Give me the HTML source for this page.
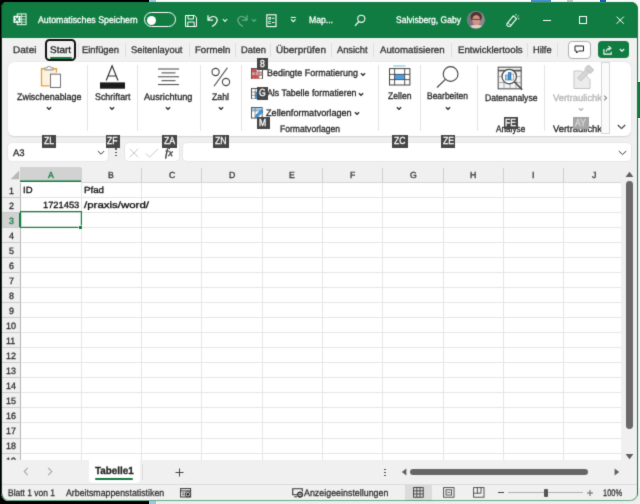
<!DOCTYPE html>
<html lang="de"><head><meta charset="utf-8"><title>Excel</title><style>
html,body{margin:0;padding:0;background:#000}
body{width:640px;height:504px;position:relative;overflow:hidden;font-family:"Liberation Sans",sans-serif}
.b{position:absolute;display:block}
.t{-webkit-text-stroke:0.3px currentColor;position:absolute;white-space:nowrap;transform-origin:0 50%;display:block}
.clip{position:absolute;overflow:hidden}
.tip{font-size:9px;text-align:center;letter-spacing:-0.2px}
.fb{background:#fff;border-radius:4px;box-shadow:0 0 0 0.6px #e0e0e0}
</style></head><body>
<svg width="0" height="0" style="position:absolute"><defs><filter id="soft" x="-1%" y="-1%" width="102%" height="102%" color-interpolation-filters="sRGB"><feConvolveMatrix order="3" kernelMatrix="1 6 1 6 36 6 1 6 1" divisor="64" edgeMode="duplicate" preserveAlpha="false"/></filter></defs></svg>
<div class="b" style="left:0.00px;top:0.00px;width:640.00px;height:504.00px;background:#000000;"></div>
<div class="b" style="left:156.00px;top:0.00px;width:484.00px;height:3.00px;background:#fbfbfb;"></div>
<div class="b" style="left:149.00px;top:0.00px;width:7.00px;height:3.00px;background:#9fc6e6;"></div>
<div class="b" style="left:531.00px;top:0.00px;width:20.00px;height:2.00px;background:#4a8fd0;"></div>
<div class="b" style="left:567.00px;top:0.00px;width:6.00px;height:2.00px;background:#c8c8c8;"></div>
<div class="b" style="left:600.00px;top:0.00px;width:6.00px;height:2.00px;background:#1f5fb4;"></div>
<div class="b" style="left:636.00px;top:0.00px;width:4.00px;height:504.00px;background:#f4f4f4;"></div>
<div class="b" style="left:156.00px;top:499.00px;width:484.00px;height:5.00px;background:#ececec;"></div>
<div class="b" style="left:149.00px;top:500.00px;width:7.00px;height:4.00px;background:#9fc6e6;"></div>
<div class="b" style="left:624.00px;top:0.00px;width:16.00px;height:14.00px;background:#f8f8f8;"></div>
<div class="b" style="left:624.00px;top:488.00px;width:16.00px;height:16.00px;background:#eeeeee;"></div>
<div class="b" style="left:637.00px;top:82.00px;width:3.00px;height:36.00px;background:#107c41;"></div>
<div class="b" id="win" style="left:1px;top:2px;width:636.5px;height:499px;background:#f0f0f0;border-radius:6px 7px 8px 8px;overflow:hidden;will-change:transform;filter:url(#soft);box-shadow:inset 0 0 0 1px #107c41">
<div class="b" style="left:-1px;top:-2px;width:640px;height:504px">
<div class="b" style="left:0.00px;top:0.00px;width:640.00px;height:38.00px;background:#107c41;"></div>
<div class="b" style="left:2.00px;top:38.00px;width:635.00px;height:24.00px;background:#f1f1f1;"></div>
<svg class="b" style="left:12.80px;top:13.30px;" width="14" height="13.1" viewBox="0 0 15 14" preserveAspectRatio="none">
<rect x="4.5" y="1" width="9.5" height="11.5" fill="none" stroke="#fff" stroke-width="1"/>
<path d="M4.5 3.8H14M4.5 6.7H14M4.5 9.6H14M9.3 1V12.5" stroke="#fff" stroke-width="0.9" opacity="0.85"/>
<rect x="0.5" y="3" width="7.5" height="7.5" fill="#fff"/>
<path d="M2.4 4.6L6.1 9M6.1 4.6L2.4 9" stroke="#107c41" stroke-width="1.1"/>
</svg>
<span class="t" style="left:38.00px;top:13.00px;font-size:9.6px;line-height:14px;color:#ffffff;transform:rotate(0.03deg) scaleX(0.9168);">Automatisches Speichern</span>
<div class="b" style="left:143.8px;top:12.4px;width:29.8px;height:12.8px;border:1.2px solid #fff;border-radius:8px"></div>
<div class="b" style="left:147.4px;top:15.6px;width:9px;height:9px;background:#fff;border-radius:50%"></div>
<svg class="b" style="left:184.00px;top:13.50px;" width="14" height="14" viewBox="0 0 14 14">
<path d="M1.5 1.5H10.5L12.5 3.5V12.5H1.5Z" fill="none" stroke="#fff" stroke-width="1"/>
<path d="M4 1.5V5H9.5V1.5M3.8 12.5V8H10.2V12.5" fill="none" stroke="#fff" stroke-width="1"/>
</svg>
<svg class="b" style="left:206.00px;top:13.00px;" width="14" height="15" viewBox="0 0 14 15">
<path d="M2 2.2V7.2H7" fill="none" stroke="#fff" stroke-width="1.2"/>
<path d="M2.2 7C4 3.6 7.5 2.6 9.8 4.4C12.4 6.5 11.5 10.2 6 13.6" fill="none" stroke="#fff" stroke-width="1.2"/>
</svg>
<svg class="b" style="left:222.00px;top:18.00px;" width="6" height="5" viewBox="0 0 6 5"><path d="M0.8 1L3 3.4L5.2 1" fill="none" stroke="#fff" stroke-width="1.1"/></svg>
<svg class="b" style="left:235.00px;top:13.00px;" width="14" height="15" viewBox="0 0 14 15">
<g opacity="0.4"><path d="M12 2.2V7.2H7" fill="none" stroke="#fff" stroke-width="1.2"/>
<path d="M11.8 7C10 3.6 6.5 2.6 4.2 4.4C1.6 6.5 2.5 10.2 8 13.6" fill="none" stroke="#fff" stroke-width="1.2"/></g>
</svg>
<svg class="b" style="left:251.00px;top:18.00px;" width="6" height="5" viewBox="0 0 6 5"><path d="M0.8 1L3 3.4L5.2 1" fill="none" stroke="#fff" stroke-width="1.1" opacity="0.4"/></svg>
<svg class="b" style="left:265.80px;top:14.00px;" width="11" height="13.5" viewBox="0 0 11 13.5">
<rect x="0.8" y="0.8" width="9.2" height="11.8" fill="none" stroke="#fff" stroke-width="1.1"/>
<rect x="2.8" y="3.4" width="1.8" height="1.8" fill="none" stroke="#fff" stroke-width="0.8"/><path d="M6 4.3H8.4" stroke="#fff" stroke-width="1"/>
<rect x="2.8" y="7.6" width="1.8" height="1.8" fill="none" stroke="#fff" stroke-width="0.8"/><path d="M6 8.5H8.4" stroke="#fff" stroke-width="1"/>
</svg>
<svg class="b" style="left:289.80px;top:16.30px;" width="7" height="8" viewBox="0 0 7 8"><path d="M0.8 1.4H5.8" stroke="#fff" stroke-width="1"/><path d="M1 3.4L3.3 5.7L5.6 3.4" fill="none" stroke="#fff" stroke-width="1.1"/></svg>
<span class="t" style="left:309.00px;top:13.00px;font-size:9.6px;line-height:14px;color:#ffffff;transform:rotate(0.03deg) scaleX(0.8997);">Map...</span>
<svg class="b" style="left:354.00px;top:14.00px;" width="12" height="13" viewBox="0 0 12 13"><circle cx="7.3" cy="4.8" r="3.6" fill="none" stroke="#fff" stroke-width="1.1"/><path d="M4.8 7.5L1 11.8" stroke="#fff" stroke-width="1.2"/></svg>
<span class="t" style="left:395.60px;top:13.00px;font-size:9.6px;line-height:14px;color:#ffffff;transform:rotate(0.03deg) scaleX(0.8892);">Salvisberg, Gaby</span>
<svg class="b" style="left:467.40px;top:11.40px;" width="17.8" height="17.8" viewBox="0 0 20 20" preserveAspectRatio="none">
<defs><clipPath id="av"><circle cx="10" cy="10" r="9.7"/></clipPath></defs>
<circle cx="10" cy="10" r="10" fill="#9a8f92"/>
<g clip-path="url(#av)">
<rect x="0" y="0" width="20" height="20" fill="#77747f"/>
<rect x="11" y="0" width="9" height="20" fill="#8d8790"/>
<ellipse cx="10.4" cy="6.8" rx="6.4" ry="6" fill="#4e3430"/>
<ellipse cx="10.4" cy="10.4" rx="4.5" ry="5.8" fill="#cf9484"/>
<path d="M6 9.4H14.8" stroke="#5a3a36" stroke-width="1.1"/>
<path d="M2 20C3 16 6.4 15.6 10.4 15.6S17.6 16 19 20Z" fill="#dccfc8"/>
</g>
</svg>
<svg class="b" style="left:505.00px;top:13.00px;" width="15" height="15" viewBox="0 0 15 15">
<path d="M1.8 11.2L8.2 2.8L11.6 5.6L5.4 13.2C3.6 14 1.6 12.8 1.8 11.2Z" fill="none" stroke="#fff" stroke-width="1.1" stroke-linejoin="round"/>
<path d="M3.2 9.6C3.6 11 4.8 11.9 6.3 12" fill="none" stroke="#fff" stroke-width="0.9"/>
<path d="M10.6 2.6L11.2 1M12.4 3.8L13.8 2.6M13 5.8L14.4 5.8" stroke="#fff" stroke-width="0.9"/>
</svg>
<div class="b" style="left:543.00px;top:20.00px;width:8.00px;height:1.00px;background:#ffffff;"></div>
<div class="b" style="left:579.3px;top:16.4px;width:6.2px;height:5.8px;border:1px solid #fff"></div>
<svg class="b" style="left:615.70px;top:16.20px;" width="9" height="9" viewBox="0 0 9 9"><path d="M0.6 0.6L7.8 7.8M7.8 0.6L0.6 7.8" stroke="#fff" stroke-width="1"/></svg>
<span class="t" style="left:13.00px;top:42.70px;font-size:9.6px;line-height:14px;color:#333333;transform:rotate(0.03deg) scaleX(1.0486);">Datei</span>
<span class="t" style="left:50.00px;top:42.70px;font-size:9.6px;line-height:14px;color:#1a1a1a;transform:rotate(0.03deg) scaleX(1.0358);">Start</span>
<span class="t" style="left:82.00px;top:42.70px;font-size:9.6px;line-height:14px;color:#333333;transform:rotate(0.03deg) scaleX(0.9763);">Einfügen</span>
<span class="t" style="left:131.00px;top:42.70px;font-size:9.6px;line-height:14px;color:#333333;transform:rotate(0.03deg) scaleX(0.9747);">Seitenlayout</span>
<span class="t" style="left:194.70px;top:42.70px;font-size:9.6px;line-height:14px;color:#333333;transform:rotate(0.03deg) scaleX(1.0026);">Formeln</span>
<span class="t" style="left:241.00px;top:42.70px;font-size:9.6px;line-height:14px;color:#333333;transform:rotate(0.03deg) scaleX(0.9759);">Daten</span>
<span class="t" style="left:276.00px;top:42.70px;font-size:9.6px;line-height:14px;color:#333333;transform:rotate(0.03deg) scaleX(1.0410);">Überprüfen</span>
<span class="t" style="left:337.00px;top:42.70px;font-size:9.6px;line-height:14px;color:#333333;transform:rotate(0.03deg) scaleX(0.9688);">Ansicht</span>
<span class="t" style="left:380.30px;top:42.70px;font-size:9.6px;line-height:14px;color:#333333;transform:rotate(0.03deg) scaleX(1.0104);">Automatisieren</span>
<span class="t" style="left:457.80px;top:42.70px;font-size:9.6px;line-height:14px;color:#333333;transform:rotate(0.03deg) scaleX(1.0106);">Entwicklertools</span>
<span class="t" style="left:533.40px;top:42.70px;font-size:9.6px;line-height:14px;color:#333333;transform:rotate(0.03deg) scaleX(0.9685);">Hilfe</span>
<div class="b" style="left:78.00px;top:43.00px;width:1.00px;height:14.00px;background:#dedede;"></div>
<div class="b" style="left:124.50px;top:43.00px;width:1.00px;height:14.00px;background:#dedede;"></div>
<div class="b" style="left:188.50px;top:43.00px;width:1.00px;height:14.00px;background:#dedede;"></div>
<div class="b" style="left:235.10px;top:43.00px;width:1.00px;height:14.00px;background:#dedede;"></div>
<div class="b" style="left:270.10px;top:43.00px;width:1.00px;height:14.00px;background:#dedede;"></div>
<div class="b" style="left:331.00px;top:43.00px;width:1.00px;height:14.00px;background:#dedede;"></div>
<div class="b" style="left:373.30px;top:43.00px;width:1.00px;height:14.00px;background:#dedede;"></div>
<div class="b" style="left:450.50px;top:43.00px;width:1.00px;height:14.00px;background:#dedede;"></div>
<div class="b" style="left:527.30px;top:43.00px;width:1.00px;height:14.00px;background:#dedede;"></div>
<div class="b" style="left:556.50px;top:43.00px;width:1.00px;height:14.00px;background:#dedede;"></div>
<div class="b" style="left:45px;top:39px;width:26.6px;height:17.6px;border:2px solid #111;border-radius:4.5px"></div>
<div class="b" style="left:49.50px;top:57.00px;width:22.50px;height:2.00px;background:#107c41;border-radius:1px"></div>
<div class="b" style="left:568px;top:41px;width:21.4px;height:16px;border:1px solid #b0b0b0;border-radius:4px;background:#fff"></div>
<svg class="b" style="left:574.00px;top:45.00px;" width="11" height="10" viewBox="0 0 11 10"><path d="M1 1H9.5V6H4.5L2.6 8V6H1Z" fill="none" stroke="#222" stroke-width="1" stroke-linejoin="round"/></svg>
<div class="b" style="left:598px;top:41px;width:31px;height:17.4px;border-radius:4px;background:#107c41"></div>
<svg class="b" style="left:603.30px;top:44.60px;" width="10" height="10" viewBox="0 0 11 11" preserveAspectRatio="none"><path d="M1 4.5V10H9V7.5" fill="none" stroke="#fff" stroke-width="1.2"/><path d="M3.5 7.4C4 4.8 5.5 3.6 7.3 3.6M6 1.2L8.8 3.6L6 6" fill="none" stroke="#fff" stroke-width="1.2"/></svg>
<svg class="b" style="left:619.00px;top:47.50px;" width="6" height="5" viewBox="0 0 6 5"><path d="M0.8 1L3 3.2L5.2 1" fill="none" stroke="#fff" stroke-width="1.1"/></svg>
<div class="b" style="left:8px;top:62px;width:623px;height:73.5px;background:#ffffff;border-radius:6px;box-shadow:0 0.5px 1.5px rgba(0,0,0,0.12)"></div>
<div class="b" style="left:87.00px;top:65.00px;width:1.00px;height:66.00px;background:#e3e3e3;"></div>
<div class="b" style="left:136.50px;top:65.00px;width:1.00px;height:66.00px;background:#e3e3e3;"></div>
<div class="b" style="left:199.50px;top:65.00px;width:1.00px;height:66.00px;background:#e3e3e3;"></div>
<div class="b" style="left:240.50px;top:65.00px;width:1.00px;height:66.00px;background:#e3e3e3;"></div>
<div class="b" style="left:377.50px;top:65.00px;width:1.00px;height:66.00px;background:#e3e3e3;"></div>
<div class="b" style="left:419.50px;top:65.00px;width:1.00px;height:66.00px;background:#e3e3e3;"></div>
<div class="b" style="left:476.50px;top:65.00px;width:1.00px;height:66.00px;background:#e3e3e3;"></div>
<div class="b" style="left:544.00px;top:65.00px;width:1.00px;height:66.00px;background:#e3e3e3;"></div>
<svg class="b" style="left:39.00px;top:64.20px;" width="24" height="25.6" viewBox="0 0 24 24" preserveAspectRatio="none">
<path d="M2.5 4.5H17.5V20.5H2.5Z" fill="#fdf1df" stroke="none"/><path d="M6 4.5H2.5V20.5H10.5" fill="none" stroke="#e3a243" stroke-width="1.3"/>
<path d="M14 4.5H17.5V8" fill="none" stroke="#e3a243" stroke-width="1.3"/>
<path d="M6 5.5V3.5H8.2C8.4 1.6 11.6 1.6 11.8 3.5H14V5.5Z" fill="#fff" stroke="#9a9a9a" stroke-width="1"/>
<rect x="11.5" y="9.5" width="10" height="12.5" fill="#fff" stroke="#666" stroke-width="0.9"/>
</svg>
<span class="t" style="left:16.50px;top:89.70px;font-size:9.6px;line-height:14px;color:#262626;transform:rotate(0.03deg) scaleX(0.9297);">Zwischenablage</span>
<svg class="b" style="left:45.50px;top:106.20px;" width="6" height="5" viewBox="0 0 6 5"><path d="M0.9 1.2L3 3.3L5.1 1.2" fill="none" stroke="#2a2a2a" stroke-width="1.25"/></svg>
<svg class="b" style="left:99.00px;top:64.00px;" width="27" height="25" viewBox="0 0 27 25">
<path d="M7.2 16.5L13.1 1.8L19 16.5M9.2 12H17" fill="none" stroke="#333" stroke-width="1.15"/>
<rect x="1" y="18.4" width="25" height="6.3" fill="#1a1a1a"/>
</svg>
<span class="t" style="left:94.50px;top:89.70px;font-size:9.6px;line-height:14px;color:#262626;transform:rotate(0.03deg) scaleX(0.9242);">Schriftart</span>
<svg class="b" style="left:109.00px;top:106.20px;" width="6" height="5" viewBox="0 0 6 5"><path d="M0.9 1.2L3 3.3L5.1 1.2" fill="none" stroke="#2a2a2a" stroke-width="1.25"/></svg>
<svg class="b" style="left:156.00px;top:66.00px;" width="26" height="22" viewBox="0 0 26 22">
<path d="M2 3H23M5.5 6.9H19.5M2 10.8H23M5.5 14.7H19.5M2 18.6H23" stroke="#444" stroke-width="1"/>
</svg>
<span class="t" style="left:144.00px;top:89.70px;font-size:9.6px;line-height:14px;color:#262626;transform:rotate(0.03deg) scaleX(0.9567);">Ausrichtung</span>
<svg class="b" style="left:165.00px;top:106.20px;" width="6" height="5" viewBox="0 0 6 5"><path d="M0.9 1.2L3 3.3L5.1 1.2" fill="none" stroke="#2a2a2a" stroke-width="1.25"/></svg>
<svg class="b" style="left:209.00px;top:65.00px;" width="24" height="24" viewBox="0 0 24 24">
<circle cx="6.6" cy="7" r="3.6" fill="none" stroke="#444" stroke-width="1.1"/>
<circle cx="17" cy="17" r="3.6" fill="none" stroke="#444" stroke-width="1.1"/>
<path d="M18.4 2.8L5 21.2" stroke="#444" stroke-width="1.1"/>
</svg>
<span class="t" style="left:212.00px;top:89.70px;font-size:9.6px;line-height:14px;color:#262626;transform:rotate(0.03deg) scaleX(0.9103);">Zahl</span>
<svg class="b" style="left:217.50px;top:106.20px;" width="6" height="5" viewBox="0 0 6 5"><path d="M0.9 1.2L3 3.3L5.1 1.2" fill="none" stroke="#2a2a2a" stroke-width="1.25"/></svg>
<svg class="b" style="left:251.00px;top:67.50px;" width="12" height="11.5" viewBox="0 0 12.5 12.5" preserveAspectRatio="none">
<rect x="0.5" y="0.5" width="11.5" height="11.5" fill="#fff" stroke="#4a4a4a" stroke-width="1"/>
<rect x="1" y="1" width="5" height="3.4" fill="#e8474a"/><rect x="1" y="4.6" width="10.5" height="3.3" fill="#f29b9c"/>
<rect x="1" y="8" width="7" height="3.5" fill="#e8474a"/>
<path d="M0.5 4.4H12M0.5 8H12M4.4 0.5V12M8.2 0.5V12" stroke="#666" stroke-width="0.7"/>
</svg>
<span class="t" style="left:266.50px;top:66.20px;font-size:9.6px;line-height:14px;color:#262626;transform:rotate(0.03deg) scaleX(0.9318);">Bedingte Formatierung</span>
<svg class="b" style="left:359.50px;top:71.50px;" width="6" height="5" viewBox="0 0 6 5"><path d="M0.9 1.2L3 3.3L5.1 1.2" fill="none" stroke="#2a2a2a" stroke-width="1.25"/></svg>
<svg class="b" style="left:251.00px;top:87.50px;" width="12" height="11.5" viewBox="0 0 12.5 12.5" preserveAspectRatio="none">
<rect x="0.5" y="0.5" width="11.5" height="11.5" fill="#fff" stroke="#4a4a4a" stroke-width="1"/>
<rect x="4.4" y="4.4" width="7.6" height="7.6" fill="#3a96dd"/>
<path d="M0.5 4.4H12M0.5 8H12M4.4 0.5V12M8.2 0.5V12" stroke="#666" stroke-width="0.7"/>
</svg>
<span class="t" style="left:266.50px;top:86.20px;font-size:9.6px;line-height:14px;color:#262626;transform:rotate(0.03deg) scaleX(0.9182);">Als Tabelle formatieren</span>
<svg class="b" style="left:358.00px;top:91.50px;" width="6" height="5" viewBox="0 0 6 5"><path d="M0.9 1.2L3 3.3L5.1 1.2" fill="none" stroke="#2a2a2a" stroke-width="1.25"/></svg>
<svg class="b" style="left:251.00px;top:107.00px;" width="13" height="12" viewBox="0 0 14 13" preserveAspectRatio="none">
<rect x="0.5" y="0.5" width="11.5" height="11.5" fill="#fff" stroke="#4a4a4a" stroke-width="1"/>
<rect x="1" y="1" width="10.5" height="3" fill="#9fcdf0"/>
<path d="M0.5 4.2H12M4.4 0.5V12" stroke="#666" stroke-width="0.7"/>
<path d="M4.5 11.5L5.2 8.8L11 3L13 5L7.2 10.8Z" fill="#3a96dd" stroke="#1e6bb0" stroke-width="0.6"/>
</svg>
<span class="t" style="left:266.00px;top:105.70px;font-size:9.6px;line-height:14px;color:#262626;transform:rotate(0.03deg) scaleX(0.9509);">Zellenformatvorlagen</span>
<svg class="b" style="left:354.00px;top:111.00px;" width="6" height="5" viewBox="0 0 6 5"><path d="M0.9 1.2L3 3.3L5.1 1.2" fill="none" stroke="#2a2a2a" stroke-width="1.25"/></svg>
<span class="t" style="left:280.00px;top:121.70px;font-size:9.6px;line-height:14px;color:#262626;transform:rotate(0.03deg) scaleX(0.8924);">Formatvorlagen</span>
<svg class="b" style="left:388.00px;top:64.00px;" width="24" height="23" viewBox="0 0 24 23">
<path d="M5.3 2H17.4" stroke="#8cc4cf" stroke-width="1.2"/>
<rect x="1.5" y="4.6" width="20.4" height="16.4" fill="#fff" stroke="#444" stroke-width="1"/>
<rect x="6.6" y="10.4" width="10.1" height="5.2" fill="#4aa0e6"/>
<path d="M1.5 10.4H21.9M1.5 15.6H21.9M6.6 4.6V21M16.7 4.6V21" stroke="#444" stroke-width="0.9"/>
</svg>
<span class="t" style="left:387.50px;top:89.45px;font-size:9.6px;line-height:14px;color:#262626;transform:rotate(0.03deg) scaleX(0.8987);">Zellen</span>
<svg class="b" style="left:396.30px;top:106.00px;" width="6" height="5" viewBox="0 0 6 5"><path d="M0.9 1.2L3 3.3L5.1 1.2" fill="none" stroke="#2a2a2a" stroke-width="1.25"/></svg>
<svg class="b" style="left:435.00px;top:64.00px;" width="26" height="26" viewBox="0 0 26 26"><circle cx="15.6" cy="10" r="7.4" fill="none" stroke="#444" stroke-width="1.1"/><path d="M10.4 15.4L2 23.5" stroke="#444" stroke-width="1.2"/></svg>
<span class="t" style="left:427.00px;top:89.45px;font-size:9.6px;line-height:14px;color:#262626;transform:rotate(0.03deg) scaleX(0.8829);">Bearbeiten</span>
<svg class="b" style="left:444.50px;top:106.00px;" width="6" height="5" viewBox="0 0 6 5"><path d="M0.9 1.2L3 3.3L5.1 1.2" fill="none" stroke="#2a2a2a" stroke-width="1.25"/></svg>
<svg class="b" style="left:497.00px;top:65.50px;" width="27" height="26" viewBox="0 0 27 26">
<rect x="1.2" y="1.2" width="23" height="21.6" fill="#f4f4f4" stroke="#555" stroke-width="1.1"/>
<path d="M1.2 4.6H24.2" stroke="#555" stroke-width="1.6"/>
<path d="M1.2 10.6H24.2M1.2 16.6H24.2M7 4.6V22.8M13 4.6V22.8M19 4.6V22.8" stroke="#8a8a8a" stroke-width="0.7"/>
<circle cx="12.2" cy="10.6" r="7.2" fill="#fff" stroke="#444" stroke-width="1.2"/>
<rect x="8.6" y="9" width="2.6" height="5" fill="#9fcdf0" stroke="#555" stroke-width="0.5"/>
<rect x="11.2" y="6.4" width="2.8" height="7.6" fill="#3a96dd" stroke="#1e6bb0" stroke-width="0.5"/>
<rect x="14" y="8" width="2.4" height="6" fill="#fff" stroke="#555" stroke-width="0.5"/>
<path d="M17.4 15.8L25.2 23.8" stroke="#444" stroke-width="1.5"/>
</svg>
<span class="t" style="left:484.50px;top:91.20px;font-size:9.6px;line-height:14px;color:#262626;transform:rotate(0.03deg) scaleX(0.8943);">Datenanalyse</span>
<span class="t" style="left:495.75px;top:121.70px;font-size:9.6px;line-height:14px;color:#262626;transform:rotate(0.03deg) scaleX(0.8564);">Analyse</span>
<svg class="b" style="left:572.00px;top:65.00px;" width="24" height="25" viewBox="0 0 24 25">
<path d="M2 6H9.5L18 14.5V23.5H2Z" fill="#ececec" stroke="#c4c4c4" stroke-width="1"/>
<g transform="rotate(-45 13 9)"><rect x="5" y="6.4" width="12" height="4.6" fill="#d6d6d6" stroke="#bdbdbd" stroke-width="0.8"/>
<rect x="17" y="5" width="5" height="7.4" fill="#d0d0d0" stroke="#bdbdbd" stroke-width="0.8"/></g>
</svg>
<div class="clip" style="left:552.5px;top:90.70px;width:48.8px;height:14px"><span class="t" style="left:0;top:0;font-size:9.6px;line-height:14px;color:#b4b4b4;transform:rotate(0.03deg) scaleX(0.9769)">Vertraulichkeit</span></div>
<svg class="b" style="left:578.00px;top:107.00px;" width="6" height="5" viewBox="0 0 6 5"><path d="M0.9 1.2L3 3.3L5.1 1.2" fill="none" stroke="#b4b4b4" stroke-width="1.25"/></svg>
<div class="clip" style="left:553px;top:121.70px;width:48.3px;height:14px"><span class="t" style="left:0;top:0;font-size:9.6px;line-height:14px;color:#262626;transform:rotate(0.03deg) scaleX(0.9769)">Vertraulichkeit</span></div>
<div class="b" style="left:601.3px;top:62px;width:8.4px;height:72px;background:#fbfbfb;border:0.8px solid #d6d6d6;box-sizing:border-box"></div>
<svg class="b" style="left:603.30px;top:95.20px;" width="5" height="6" viewBox="0 0 5 6"><path d="M1.2 0.8L3.6 3L1.2 5.2" fill="none" stroke="#444" stroke-width="1"/></svg>
<svg class="b" style="left:616.50px;top:123.50px;" width="9" height="6" viewBox="0 0 9 6"><path d="M0.8 1L4.5 4.6L8.2 1" fill="none" stroke="#333" stroke-width="1.1"/></svg>
<div class="b fb" style="left:8px;top:143px;width:100px;height:18px"></div>
<span class="t" style="left:13.00px;top:145.60px;font-size:9.6px;line-height:14px;color:#262626;transform:rotate(0.03deg) scaleX(0.9878);">A3</span>
<svg class="b" style="left:96.50px;top:150.00px;" width="8" height="6" viewBox="0 0 8 6"><path d="M0.8 1L4 4.2L7.2 1" fill="none" stroke="#333" stroke-width="1"/></svg>
<div class="b" style="left:115.00px;top:148.30px;width:1.60px;height:1.60px;background:#3c3c3c;border-radius:50%"></div>
<div class="b" style="left:115.00px;top:151.50px;width:1.60px;height:1.60px;background:#3c3c3c;border-radius:50%"></div>
<div class="b" style="left:115.00px;top:154.70px;width:1.60px;height:1.60px;background:#3c3c3c;border-radius:50%"></div>
<div class="b fb" style="left:124.5px;top:143px;width:54.3px;height:18px"></div>
<svg class="b" style="left:128.50px;top:147.50px;" width="10" height="10" viewBox="0 0 10 10"><path d="M0.8 0.8L9.2 9.2M9.2 0.8L0.8 9.2" stroke="#c2c2c2" stroke-width="0.9"/></svg>
<svg class="b" style="left:145.00px;top:147.50px;" width="14" height="10" viewBox="0 0 14 10"><path d="M0.8 5.4L4.6 9.2L13 0.8" fill="none" stroke="#c2c2c2" stroke-width="0.9"/></svg>
<span class="t" style="left:164.5px;top:145.3px;font-family:'Liberation Serif',serif;font-style:italic;font-size:11.5px;line-height:14px;color:#2e2e2e;-webkit-text-stroke:0.3px #2e2e2e;transform:rotate(0.03deg) scaleX(1.05)">f<span style="font-size:10px">x</span></span>
<div class="b fb" style="left:182.5px;top:143px;width:448.5px;height:18px"></div>
<svg class="b" style="left:618.00px;top:150.00px;" width="9" height="6" viewBox="0 0 9 6"><path d="M0.8 1L4.5 4.6L8.2 1" fill="none" stroke="#333" stroke-width="1"/></svg>
<div class="b" style="left:2.00px;top:167.00px;width:635.00px;height:293.00px;background:#f0f0f0;"></div>
<div class="b" style="left:20.50px;top:182.00px;width:600.50px;height:278.00px;background:#ffffff;"></div>
<div class="b" style="left:20.00px;top:167.00px;width:61.00px;height:15.00px;background:#d2d2d2;"></div>
<div class="b" style="left:20.00px;top:180.00px;width:61.00px;height:1.00px;background:#107c41;opacity:0.55"></div>
<div class="b" style="left:20.00px;top:181.00px;width:61.00px;height:1.00px;background:#107c41;"></div>
<div class="b" style="left:2.00px;top:212.56px;width:18.50px;height:15.03px;background:#d2d2d2;"></div>
<div class="b" style="left:19.00px;top:212.56px;width:1.70px;height:15.03px;background:#107c41;"></div>
<div class="b" style="left:80.50px;top:168.00px;width:1.00px;height:14.00px;background:#cfcfcf;"></div>
<div class="b" style="left:140.80px;top:168.00px;width:1.00px;height:14.00px;background:#cfcfcf;"></div>
<div class="b" style="left:201.20px;top:168.00px;width:1.00px;height:14.00px;background:#cfcfcf;"></div>
<div class="b" style="left:261.50px;top:168.00px;width:1.00px;height:14.00px;background:#cfcfcf;"></div>
<div class="b" style="left:321.90px;top:168.00px;width:1.00px;height:14.00px;background:#cfcfcf;"></div>
<div class="b" style="left:382.20px;top:168.00px;width:1.00px;height:14.00px;background:#cfcfcf;"></div>
<div class="b" style="left:442.50px;top:168.00px;width:1.00px;height:14.00px;background:#cfcfcf;"></div>
<div class="b" style="left:502.90px;top:168.00px;width:1.00px;height:14.00px;background:#cfcfcf;"></div>
<div class="b" style="left:563.30px;top:168.00px;width:1.00px;height:14.00px;background:#cfcfcf;"></div>
<div class="b" style="left:81.00px;top:182.00px;width:540.00px;height:1.00px;background:#d4d4d4;"></div>
<div class="b" style="left:20.00px;top:183.00px;width:1.00px;height:277.00px;background:#b4b4b4;"></div>
<svg class="b" style="left:9.50px;top:170.00px;" width="10" height="10" viewBox="0 0 10 10"><path d="M9.2 0.6V9.2H0.6Z" fill="#b8b8b8"/></svg>
<div class="b" style="left:2.00px;top:197.03px;width:18.50px;height:1.00px;background:#cacaca;"></div>
<div class="b" style="left:20.50px;top:197.03px;width:600.50px;height:1.00px;background:#e6e6e6;"></div>
<div class="b" style="left:2.00px;top:212.06px;width:18.50px;height:1.00px;background:#cacaca;"></div>
<div class="b" style="left:20.50px;top:212.06px;width:600.50px;height:1.00px;background:#e6e6e6;"></div>
<div class="b" style="left:2.00px;top:227.09px;width:18.50px;height:1.00px;background:#cacaca;"></div>
<div class="b" style="left:20.50px;top:227.09px;width:600.50px;height:1.00px;background:#e6e6e6;"></div>
<div class="b" style="left:2.00px;top:242.12px;width:18.50px;height:1.00px;background:#cacaca;"></div>
<div class="b" style="left:20.50px;top:242.12px;width:600.50px;height:1.00px;background:#e6e6e6;"></div>
<div class="b" style="left:2.00px;top:257.15px;width:18.50px;height:1.00px;background:#cacaca;"></div>
<div class="b" style="left:20.50px;top:257.15px;width:600.50px;height:1.00px;background:#e6e6e6;"></div>
<div class="b" style="left:2.00px;top:272.18px;width:18.50px;height:1.00px;background:#cacaca;"></div>
<div class="b" style="left:20.50px;top:272.18px;width:600.50px;height:1.00px;background:#e6e6e6;"></div>
<div class="b" style="left:2.00px;top:287.21px;width:18.50px;height:1.00px;background:#cacaca;"></div>
<div class="b" style="left:20.50px;top:287.21px;width:600.50px;height:1.00px;background:#e6e6e6;"></div>
<div class="b" style="left:2.00px;top:302.24px;width:18.50px;height:1.00px;background:#cacaca;"></div>
<div class="b" style="left:20.50px;top:302.24px;width:600.50px;height:1.00px;background:#e6e6e6;"></div>
<div class="b" style="left:2.00px;top:317.27px;width:18.50px;height:1.00px;background:#cacaca;"></div>
<div class="b" style="left:20.50px;top:317.27px;width:600.50px;height:1.00px;background:#e6e6e6;"></div>
<div class="b" style="left:2.00px;top:332.30px;width:18.50px;height:1.00px;background:#cacaca;"></div>
<div class="b" style="left:20.50px;top:332.30px;width:600.50px;height:1.00px;background:#e6e6e6;"></div>
<div class="b" style="left:2.00px;top:347.33px;width:18.50px;height:1.00px;background:#cacaca;"></div>
<div class="b" style="left:20.50px;top:347.33px;width:600.50px;height:1.00px;background:#e6e6e6;"></div>
<div class="b" style="left:2.00px;top:362.36px;width:18.50px;height:1.00px;background:#cacaca;"></div>
<div class="b" style="left:20.50px;top:362.36px;width:600.50px;height:1.00px;background:#e6e6e6;"></div>
<div class="b" style="left:2.00px;top:377.39px;width:18.50px;height:1.00px;background:#cacaca;"></div>
<div class="b" style="left:20.50px;top:377.39px;width:600.50px;height:1.00px;background:#e6e6e6;"></div>
<div class="b" style="left:2.00px;top:392.42px;width:18.50px;height:1.00px;background:#cacaca;"></div>
<div class="b" style="left:20.50px;top:392.42px;width:600.50px;height:1.00px;background:#e6e6e6;"></div>
<div class="b" style="left:2.00px;top:407.45px;width:18.50px;height:1.00px;background:#cacaca;"></div>
<div class="b" style="left:20.50px;top:407.45px;width:600.50px;height:1.00px;background:#e6e6e6;"></div>
<div class="b" style="left:2.00px;top:422.48px;width:18.50px;height:1.00px;background:#cacaca;"></div>
<div class="b" style="left:20.50px;top:422.48px;width:600.50px;height:1.00px;background:#e6e6e6;"></div>
<div class="b" style="left:2.00px;top:437.51px;width:18.50px;height:1.00px;background:#cacaca;"></div>
<div class="b" style="left:20.50px;top:437.51px;width:600.50px;height:1.00px;background:#e6e6e6;"></div>
<div class="b" style="left:2.00px;top:452.54px;width:18.50px;height:1.00px;background:#cacaca;"></div>
<div class="b" style="left:20.50px;top:452.54px;width:600.50px;height:1.00px;background:#e6e6e6;"></div>
<div class="b" style="left:80.50px;top:183.00px;width:1.00px;height:277.00px;background:#e6e6e6;"></div>
<div class="b" style="left:140.80px;top:183.00px;width:1.00px;height:277.00px;background:#e6e6e6;"></div>
<div class="b" style="left:201.20px;top:183.00px;width:1.00px;height:277.00px;background:#e6e6e6;"></div>
<div class="b" style="left:261.50px;top:183.00px;width:1.00px;height:277.00px;background:#e6e6e6;"></div>
<div class="b" style="left:321.90px;top:183.00px;width:1.00px;height:277.00px;background:#e6e6e6;"></div>
<div class="b" style="left:382.20px;top:183.00px;width:1.00px;height:277.00px;background:#e6e6e6;"></div>
<div class="b" style="left:442.50px;top:183.00px;width:1.00px;height:277.00px;background:#e6e6e6;"></div>
<div class="b" style="left:502.90px;top:183.00px;width:1.00px;height:277.00px;background:#e6e6e6;"></div>
<div class="b" style="left:563.30px;top:183.00px;width:1.00px;height:277.00px;background:#e6e6e6;"></div>
<span class="t" style="left:48.09px;top:167.60px;font-size:8.9px;line-height:14px;color:#107c41;transform:rotate(0.03deg) scaleX(0.9800);">A</span>
<span class="t" style="left:108.09px;top:167.60px;font-size:8.9px;line-height:14px;color:#333;transform:rotate(0.03deg) scaleX(0.9800);">B</span>
<span class="t" style="left:168.85px;top:167.60px;font-size:8.9px;line-height:14px;color:#333;transform:rotate(0.03deg) scaleX(0.9800);">C</span>
<span class="t" style="left:228.85px;top:167.60px;font-size:8.9px;line-height:14px;color:#333;transform:rotate(0.03deg) scaleX(0.9800);">D</span>
<span class="t" style="left:289.09px;top:167.60px;font-size:8.9px;line-height:14px;color:#333;transform:rotate(0.03deg) scaleX(0.9800);">E</span>
<span class="t" style="left:350.34px;top:167.60px;font-size:8.9px;line-height:14px;color:#333;transform:rotate(0.03deg) scaleX(0.9800);">F</span>
<span class="t" style="left:409.61px;top:167.60px;font-size:8.9px;line-height:14px;color:#333;transform:rotate(0.03deg) scaleX(0.9800);">G</span>
<span class="t" style="left:469.85px;top:167.60px;font-size:8.9px;line-height:14px;color:#333;transform:rotate(0.03deg) scaleX(0.9800);">H</span>
<span class="t" style="left:531.79px;top:167.60px;font-size:8.9px;line-height:14px;color:#333;transform:rotate(0.03deg) scaleX(0.9800);">I</span>
<span class="t" style="left:591.82px;top:167.60px;font-size:8.9px;line-height:14px;color:#333;transform:rotate(0.03deg) scaleX(0.9800);">J</span>
<span class="t" style="left:8.52px;top:183.56px;font-size:9.2px;line-height:14px;color:#2c2c2c;transform:rotate(0.03deg) scaleX(0.9700);">1</span>
<span class="t" style="left:8.52px;top:198.59px;font-size:9.2px;line-height:14px;color:#2c2c2c;transform:rotate(0.03deg) scaleX(0.9700);">2</span>
<span class="t" style="left:8.52px;top:213.62px;font-size:9.2px;line-height:14px;color:#107c41;transform:rotate(0.03deg) scaleX(0.9700);">3</span>
<span class="t" style="left:8.52px;top:228.65px;font-size:9.2px;line-height:14px;color:#2c2c2c;transform:rotate(0.03deg) scaleX(0.9700);">4</span>
<span class="t" style="left:8.52px;top:243.68px;font-size:9.2px;line-height:14px;color:#2c2c2c;transform:rotate(0.03deg) scaleX(0.9700);">5</span>
<span class="t" style="left:8.52px;top:258.71px;font-size:9.2px;line-height:14px;color:#2c2c2c;transform:rotate(0.03deg) scaleX(0.9700);">6</span>
<span class="t" style="left:8.52px;top:273.75px;font-size:9.2px;line-height:14px;color:#2c2c2c;transform:rotate(0.03deg) scaleX(0.9700);">7</span>
<span class="t" style="left:8.52px;top:288.78px;font-size:9.2px;line-height:14px;color:#2c2c2c;transform:rotate(0.03deg) scaleX(0.9700);">8</span>
<span class="t" style="left:8.52px;top:303.81px;font-size:9.2px;line-height:14px;color:#2c2c2c;transform:rotate(0.03deg) scaleX(0.9700);">9</span>
<span class="t" style="left:6.04px;top:318.83px;font-size:9.2px;line-height:14px;color:#2c2c2c;transform:rotate(0.03deg) scaleX(0.9700);">10</span>
<span class="t" style="left:6.37px;top:333.87px;font-size:9.2px;line-height:14px;color:#2c2c2c;transform:rotate(0.03deg) scaleX(0.9700);">11</span>
<span class="t" style="left:6.04px;top:348.90px;font-size:9.2px;line-height:14px;color:#2c2c2c;transform:rotate(0.03deg) scaleX(0.9700);">12</span>
<span class="t" style="left:6.04px;top:363.93px;font-size:9.2px;line-height:14px;color:#2c2c2c;transform:rotate(0.03deg) scaleX(0.9700);">13</span>
<span class="t" style="left:6.04px;top:378.95px;font-size:9.2px;line-height:14px;color:#2c2c2c;transform:rotate(0.03deg) scaleX(0.9700);">14</span>
<span class="t" style="left:6.04px;top:393.99px;font-size:9.2px;line-height:14px;color:#2c2c2c;transform:rotate(0.03deg) scaleX(0.9700);">15</span>
<span class="t" style="left:6.04px;top:409.02px;font-size:9.2px;line-height:14px;color:#2c2c2c;transform:rotate(0.03deg) scaleX(0.9700);">16</span>
<span class="t" style="left:6.04px;top:424.05px;font-size:9.2px;line-height:14px;color:#2c2c2c;transform:rotate(0.03deg) scaleX(0.9700);">17</span>
<span class="t" style="left:6.04px;top:439.07px;font-size:9.2px;line-height:14px;color:#2c2c2c;transform:rotate(0.03deg) scaleX(0.9700);">18</span>
<div class="clip" style="left:2px;top:454.11px;width:18px;height:5.89px"><span class="t" style="left:4.04px;top:0;font-size:9.2px;line-height:14px;color:#2c2c2c;transform:rotate(0.03deg) scaleX(0.97)">19</span></div>
<span class="t" style="left:23.00px;top:183.20px;font-size:9.0px;line-height:14px;color:#111;transform:rotate(0.03deg) scaleX(1.0556);">ID</span>
<span class="t" style="left:83.75px;top:183.20px;font-size:9.0px;line-height:14px;color:#111;transform:rotate(0.03deg) scaleX(1.0802);">Pfad</span>
<span class="t" style="left:42.50px;top:198.30px;font-size:9.0px;line-height:14px;color:#111;transform:rotate(0.03deg) scaleX(1.0346);">1721453</span>
<span class="t" style="left:83.75px;top:198.30px;font-size:9.0px;line-height:14px;color:#111;transform:rotate(0.03deg) scaleX(1.2741);">/praxis/word/</span>
<div class="b" style="left:20px;top:211px;width:62px;height:17px;border:1px solid #107c41;box-shadow:inset 0 0 0 1px rgba(16,124,65,0.22);box-sizing:border-box"></div>
<div class="b" style="left:79px;top:225.6px;width:3.4px;height:3.4px;background:#107c41;box-shadow:0 0 0 0.6px #fff"></div>
<div class="b" style="left:621.00px;top:167.00px;width:16.00px;height:293.00px;background:#f0f0f0;"></div>
<svg class="b" style="left:625.30px;top:170.50px;" width="9" height="7" viewBox="0 0 9 7"><path d="M0.6 6L4.5 0.8L8.4 6Z" fill="#5f5f5f"/></svg>
<div class="b" style="left:626.2px;top:180.5px;width:6.8px;height:248px;background:#6a6868;border-radius:3.4px"></div>
<svg class="b" style="left:625.30px;top:452.60px;" width="9" height="7" viewBox="0 0 9 7"><path d="M0.6 1L4.5 6.2L8.4 1Z" fill="#5f5f5f"/></svg>
<div class="b" style="left:2.00px;top:460.00px;width:635.00px;height:24.50px;background:#f0f0f0;"></div>
<svg class="b" style="left:22.50px;top:467.00px;" width="6" height="9" viewBox="0 0 6 9"><path d="M4.8 0.8L1.2 4.5L4.8 8.2" fill="none" stroke="#a8a8a8" stroke-width="1.1"/></svg>
<svg class="b" style="left:47.00px;top:467.00px;" width="6" height="9" viewBox="0 0 6 9"><path d="M1.2 0.8L4.8 4.5L1.2 8.2" fill="none" stroke="#a8a8a8" stroke-width="1.1"/></svg>
<div class="b" style="left:88.8px;top:460px;width:51.2px;height:22.5px;background:#fff;border-radius:0 0 4px 4px"></div>
<span class="t" style="left:95.00px;top:464.00px;font-size:10.3px;line-height:14px;color:#222;transform:rotate(0.03deg) scaleX(0.9578);font-weight:bold;">Tabelle1</span>
<div class="b" style="left:95.00px;top:478.00px;width:38.30px;height:2.00px;background:#107c41;border-radius:1px"></div>
<div class="b" style="left:142.00px;top:464.00px;width:1.00px;height:16.00px;background:#dcdcdc;"></div>
<svg class="b" style="left:174.50px;top:467.50px;" width="9" height="9" viewBox="0 0 9 9"><path d="M4.5 0.5V8.5M0.5 4.5H8.5" stroke="#444" stroke-width="1"/></svg>
<div class="b" style="left:384.20px;top:468.50px;width:1.60px;height:1.60px;background:#3c3c3c;border-radius:50%"></div>
<div class="b" style="left:384.20px;top:471.60px;width:1.60px;height:1.60px;background:#3c3c3c;border-radius:50%"></div>
<div class="b" style="left:384.20px;top:474.70px;width:1.60px;height:1.60px;background:#3c3c3c;border-radius:50%"></div>
<svg class="b" style="left:400.50px;top:468.00px;" width="6" height="8" viewBox="0 0 6 8"><path d="M5.4 0.6V7.4L0.8 4Z" fill="#5f5f5f"/></svg>
<div class="b" style="left:410px;top:468.8px;width:178px;height:6.2px;background:#666;border-radius:3.1px"></div>
<svg class="b" style="left:614.00px;top:468.00px;" width="6" height="8" viewBox="0 0 6 8"><path d="M0.6 0.6V7.4L5.2 4Z" fill="#5f5f5f"/></svg>
<div class="b" style="left:2.00px;top:484.00px;width:635.00px;height:1.00px;background:#dcdcdc;"></div>
<div class="b" style="left:2.00px;top:485.00px;width:635.00px;height:16.00px;background:#f0f0f0;"></div>
<span class="t" style="left:7.50px;top:485.70px;font-size:9.6px;line-height:14px;color:#333;transform:rotate(0.03deg) scaleX(0.8807);">Blatt 1 von 1</span>
<span class="t" style="left:66.25px;top:485.70px;font-size:9.6px;line-height:14px;color:#333;transform:rotate(0.03deg) scaleX(0.9160);">Arbeitsmappenstatistiken</span>
<svg class="b" style="left:180.00px;top:488.00px;" width="12" height="10" viewBox="0 0 12 10">
<rect x="0.6" y="0.6" width="10" height="8.4" fill="none" stroke="#333" stroke-width="1"/>
<path d="M0.6 2.9H10.6" stroke="#333" stroke-width="1"/><path d="M2.2 5H4.4M2.2 6.8H4.4" stroke="#333" stroke-width="0.9"/>
<circle cx="7.9" cy="6.3" r="2.7" fill="#f0f0f0" stroke="#2a2a2a" stroke-width="1"/><circle cx="7.9" cy="6.3" r="1.4" fill="#222"/>
</svg>
<svg class="b" style="left:291.50px;top:488.00px;" width="12" height="10" viewBox="0 0 12 10">
<path d="M5 6.8H0.7V0.7H10.3V3.4" fill="none" stroke="#333" stroke-width="1.1"/>
<path d="M2.2 8.8H5" stroke="#333" stroke-width="1"/>
<circle cx="8" cy="6.6" r="2.3" fill="#f0f0f0" stroke="#2a2a2a" stroke-width="1.3"/><circle cx="8" cy="6.6" r="0.8" fill="#222"/>
<path d="M8 3.4V4.2M8 9V9.8M4.8 6.6H5.6M10.4 6.6H11.2M5.8 4.4L6.4 5M9.6 8.2L10.2 8.8M10.2 4.4L9.6 5M6.4 8.2L5.8 8.8" stroke="#2a2a2a" stroke-width="0.9"/>
</svg>
<span class="t" style="left:304.25px;top:485.70px;font-size:9.6px;line-height:14px;color:#333;transform:rotate(0.03deg) scaleX(0.9258);">Anzeigeeinstellungen</span>
<div class="b" style="left:405.00px;top:485.00px;width:27.00px;height:15.50px;background:#dbdbdb;"></div>
<svg class="b" style="left:412.50px;top:487.30px;" width="11" height="11" viewBox="0 0 11 11"><rect x="0.6" y="0.6" width="9.6" height="9.6" fill="none" stroke="#333" stroke-width="0.9"/><path d="M0.6 3.8H10.2M0.6 7H10.2M3.8 0.6V10.2M7 0.6V10.2" stroke="#333" stroke-width="0.8"/></svg>
<svg class="b" style="left:443.00px;top:487.00px;" width="12" height="11" viewBox="0 0 12 11"><rect x="0.6" y="0.6" width="10.4" height="9.6" fill="none" stroke="#444" stroke-width="0.9"/><rect x="3" y="2.8" width="5.6" height="5.2" fill="none" stroke="#444" stroke-width="0.9"/><path d="M4.2 5.4H7.4" stroke="#444" stroke-width="0.8"/></svg>
<svg class="b" style="left:473.00px;top:487.00px;" width="12" height="11" viewBox="0 0 12 11"><rect x="0.6" y="0.6" width="10.4" height="9.6" fill="none" stroke="#444" stroke-width="0.9"/><path d="M0.6 6.2H8V0.6M4.4 0.6V6.2" fill="none" stroke="#444" stroke-width="0.9"/></svg>
<div class="b" style="left:498.00px;top:492.00px;width:5.80px;height:1.00px;background:#444;"></div>
<div class="b" style="left:508.00px;top:492.10px;width:75.00px;height:0.80px;background:#b0b0b0;"></div>
<div class="b" style="left:544.30px;top:488.60px;width:3.50px;height:8.40px;background:#555;border-radius:1px"></div>
<svg class="b" style="left:586.00px;top:488.80px;" width="8" height="8" viewBox="0 0 8 8"><path d="M4 1V7M1 4H7" stroke="#555" stroke-width="0.9"/></svg>
<span class="t" style="left:603.00px;top:485.70px;font-size:9.6px;line-height:14px;color:#333;transform:rotate(0.03deg) scaleX(0.7738);">100%</span>
<div class="b" style="left:257.00px;top:58.00px;width:11.00px;height:11.50px;background:#464646"></div>
<span class="t" style="left:260.09px;top:56.75px;font-size:10.3px;line-height:14px;color:#ffffff;transform:rotate(0.03deg) scaleX(0.8400);">8</span>
<div class="b" style="left:257.00px;top:87.00px;width:11.00px;height:12.50px;background:#464646"></div>
<span class="t" style="left:259.14px;top:86.25px;font-size:10.3px;line-height:14px;color:#ffffff;transform:rotate(0.03deg) scaleX(0.8400);">G</span>
<div class="b" style="left:256.50px;top:117.00px;width:13.00px;height:12.30px;background:#464646"></div>
<span class="t" style="left:259.40px;top:116.15px;font-size:10.3px;line-height:14px;color:#ffffff;transform:rotate(0.03deg) scaleX(0.8400);">M</span>
<div class="b" style="left:503.75px;top:116.75px;width:13.75px;height:11.75px;background:#464646"></div>
<span class="t" style="left:505.10px;top:115.62px;font-size:10.3px;line-height:14px;color:#ffffff;transform:rotate(0.03deg) scaleX(0.8400);">FE</span>
<div class="b" style="left:573.00px;top:116.75px;width:15.75px;height:11.75px;background:#a6a6a6"></div>
<span class="t" style="left:575.42px;top:115.62px;font-size:10.3px;line-height:14px;color:#d9d9d9;transform:rotate(0.03deg) scaleX(0.8400);">AY</span>
<div class="b" style="left:42.20px;top:135.00px;width:14.20px;height:12.60px;background:#464646"></div>
<span class="t" style="left:44.25px;top:134.30px;font-size:10.3px;line-height:14px;color:#ffffff;transform:rotate(0.03deg) scaleX(0.8400);">ZL</span>
<div class="b" style="left:105.50px;top:135.00px;width:14.50px;height:12.60px;background:#464646"></div>
<span class="t" style="left:107.46px;top:134.30px;font-size:10.3px;line-height:14px;color:#ffffff;transform:rotate(0.03deg) scaleX(0.8400);">ZF</span>
<div class="b" style="left:162.00px;top:135.00px;width:15.00px;height:12.60px;background:#464646"></div>
<span class="t" style="left:163.97px;top:134.30px;font-size:10.3px;line-height:14px;color:#ffffff;transform:rotate(0.03deg) scaleX(0.8400);">ZA</span>
<div class="b" style="left:212.50px;top:135.00px;width:16.25px;height:12.60px;background:#464646"></div>
<span class="t" style="left:214.86px;top:134.30px;font-size:10.3px;line-height:14px;color:#ffffff;transform:rotate(0.03deg) scaleX(0.8400);">ZN</span>
<div class="b" style="left:392.00px;top:135.00px;width:15.50px;height:12.60px;background:#464646"></div>
<span class="t" style="left:393.98px;top:134.30px;font-size:10.3px;line-height:14px;color:#ffffff;transform:rotate(0.03deg) scaleX(0.8400);">ZC</span>
<div class="b" style="left:441.25px;top:135.00px;width:13.75px;height:12.60px;background:#464646"></div>
<span class="t" style="left:442.60px;top:134.30px;font-size:10.3px;line-height:14px;color:#ffffff;transform:rotate(0.03deg) scaleX(0.8400);">ZE</span>
</div>
<div class="b" style="left:0;top:0;width:636.5px;height:499px;box-sizing:border-box;border:1px solid rgba(16,124,65,0.6);border-left-color:#0a4023;border-radius:6px 7px 8px 8px"></div>
</div>
</body></html>
